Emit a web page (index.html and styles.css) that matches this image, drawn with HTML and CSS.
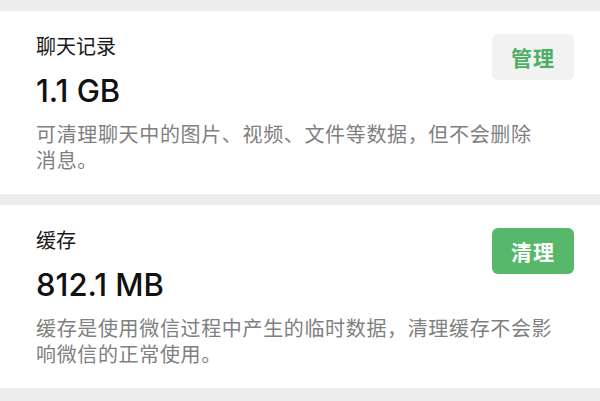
FILE: index.html
```html
<!DOCTYPE html>
<html lang="zh-CN">
<head>
<meta charset="utf-8">
<link rel="stylesheet" href="styles.css">
</head>
<body>
<div class="page">
  <section class="card">
    <div class="top">
      <div class="info">
        <div class="title">聊天记录</div>
        <div class="amount">1.1 GB</div>
      </div>
      <button class="btn btn-light">管理</button>
    </div>
    <p class="desc">可清理聊天中的图片、视频、文件等数据，但不会删除<br>消息。</p>
  </section>
  <section class="card">
    <div class="top">
      <div class="info">
        <div class="title">缓存</div>
        <div class="amount">812.1 MB</div>
      </div>
      <button class="btn btn-green">清理</button>
    </div>
    <p class="desc">缓存是使用微信过程中产生的临时数据，清理缓存不会影<br>响微信的正常使用。</p>
  </section>
</div>
</body>
</html>
```
FILE: styles.css
```css
html, body {
  margin: 0;
  padding: 0;
  background: #ededed;
}
body {
  width: 600px;
  height: 401px;
  overflow: hidden;
  font-family: "Noto Sans CJK SC", "Noto Sans", sans-serif;
}
.page {
  display: flex;
  flex-direction: column;
  gap: 11px;
  padding-top: 11px;
}
.card {
  background: #ffffff;
  height: 183px;
  box-sizing: border-box;
  padding: 22px 26px 0 36px;
}
.top {
  display: flex;
  justify-content: space-between;
  align-items: flex-start;
}
.info {
  display: flex;
  flex-direction: column;
  gap: 14px;
}
.title {
  font-size: 20px;
  line-height: 26px;
  color: #1a1a1a;
}
.amount {
  font-family: Inter, Roboto, sans-serif;
  font-weight: 500;
  font-size: 31px;
  line-height: 36px;
  color: #111111;
  letter-spacing: 0;
}
.btn {
  margin-top: 1px;
  width: 82px;
  height: 46px;
  border: none;
  border-radius: 6px;
  font-family: "Noto Sans CJK SC", sans-serif;
  font-size: 21px;
  font-weight: 700;
  letter-spacing: 1px;
  padding: 0;
}
.btn-light {
  background: #f2f2f2;
  color: #4caf62;
}
.btn-green {
  background: #57b86b;
  color: #ffffff;
}
.desc {
  margin: 11.5px 0 0;
  font-size: 20px;
  letter-spacing: 0.65px;
  line-height: 26px;
  color: #808080;
}
```
